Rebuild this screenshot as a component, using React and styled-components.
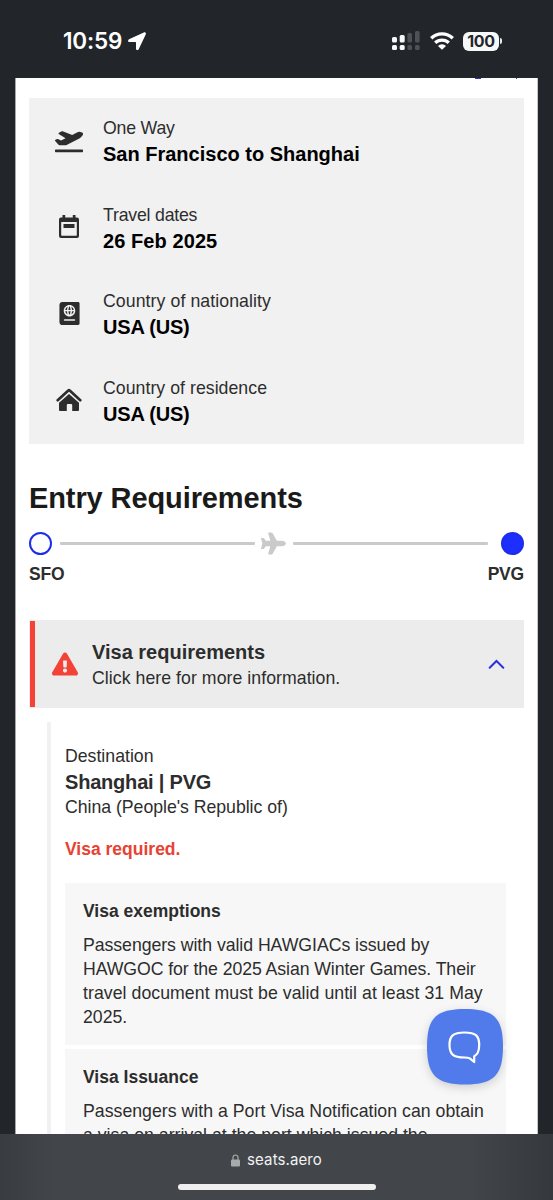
import React from 'react'
import styled, { createGlobalStyle } from 'styled-components'
import { FaExclamationTriangle, FaPassport, FaPlaneDeparture } from 'react-icons/fa'
import { FaPlane } from 'react-icons/fa6'

const GlobalStyle = createGlobalStyle`
  * {
    box-sizing: border-box;
  }

  body {
    margin: 0;
    background: #22262b;
    font-family: 'Liberation Sans', Arial, sans-serif;
    color: #2d2d2d;
  }

  svg {
    display: block;
    flex: none;
  }
`

const Screen = styled.div`
  width: 553px;
  height: 1200px;
  display: flex;
  flex-direction: column;
  overflow: hidden;
`

const StatusBar = styled.header`
  height: 78px;
  flex: none;
  display: flex;
  justify-content: space-between;
  align-items: center;
  padding: 4px 51px 0 63px;
  color: #fff;
`

const Clock = styled.div`
  display: flex;
  align-items: center;
  gap: 6px;
  font: 600 22.5px/28px Inter, sans-serif;
  letter-spacing: -0.2px;
`

const Signals = styled.div`
  display: flex;
  align-items: center;
  gap: 9px;
`

const Battery = styled.div`
  display: flex;
  align-items: center;
  gap: 1px;
`

const BatteryLevel = styled.div`
  width: 36px;
  height: 19px;
  border-radius: 6px;
  background: #f7f8f9;
  color: #22262b;
  text-align: center;
  font: 700 16px/19px Inter, sans-serif;
  letter-spacing: -0.3px;
`

const BatteryTip = styled.div`
  width: 2px;
  height: 6px;
  border-radius: 0 2px 2px 0;
  background: #e8e9ea;
`

const Page = styled.main`
  flex: 1;
  min-height: 0;
  overflow: hidden;
  margin: 0 15px 0 15px;
  padding: 20px 13px 0 13px;
  border-left: 1px solid #a6a7a9;
  border-right: 1px solid #c4c5c6;
  background: #fff;
`

const Summary = styled.section`
  height: 346px;
  padding: 18px 26px 0 23px;
  background: #f1f1f1;
`

const SummaryRow = styled.div`
  display: flex;
  height: 86.5px;
`

const IconCell = styled.div`
  width: 34px;
  height: 49px;
  display: flex;
  align-items: center;
  justify-content: center;
  margin-right: 17px;
  color: #2d2d2d;
`

const Label = styled.div`
  font-size: 17.7px;
  line-height: ${props => props.$line || 24}px;
  height: 25px;
  letter-spacing: ${props => props.$spacing || 0}px;
  white-space: nowrap;
`

const Value = styled.div`
  font-size: 20px;
  line-height: 26px;
  font-weight: bold;
  letter-spacing: ${props => props.$spacing || 0}px;
  color: ${props => props.$color || '#000'};
  white-space: nowrap;
`

const Heading = styled.h1`
  margin: 35px 0 0;
  font-size: 29px;
  line-height: 38px;
  letter-spacing: -0.1px;
  color: #1a1a1a;
`

const Route = styled.div`
  height: 24px;
  margin-top: 14px;
  display: flex;
  align-items: center;
  color: #cacaca;
`

const Stop = styled.div`
  width: 23px;
  height: 23px;
  flex: none;
  border-radius: 50%;
  border: 2.5px solid #1d2eea;
  background: ${props => props.$filled ? '#1d2eff' : '#fff'};
`

const Track = styled.div`
  flex: 1;
  height: 3px;
  border-radius: 1px;
  background: #cacaca;
  margin: ${props => props.$end ? '0 13px 0 7px' : '0 6px 0 8px'};
`

const Codes = styled.div`
  display: flex;
  justify-content: space-between;
  margin-top: 6px;
  font-size: 17.5px;
  line-height: 26px;
  font-weight: bold;
  letter-spacing: -0.2px;
`

const Accordion = styled.div`
  height: 88px;
  margin-top: 33px;
  padding: 0 19px 0 1px;
  display: flex;
  align-items: center;
  background: #ececec;
  color: #f44336;
`

const AlertStripe = styled.div`
  width: 5px;
  height: 86px;
  margin-right: 17px;
  background: #f44336;
`

const AccordionText = styled.div`
  flex: 1;
  margin-left: 14px;
  color: #2d2d2d;
`

const Details = styled.div`
  margin: 14px 18px 0 18px;
  padding: 22px 0 0 14px;
  border-left: 4px solid #f1f1f1;
`

const VisaStatus = styled.div`
  margin: 17px 0 21px;
  font-size: 17.5px;
  line-height: 25px;
  font-weight: bold;
  color: #e84233;
`

const Card = styled.article`
  margin-bottom: 4px;
  padding: 16px 17px 16px 18px;
  background: #f7f7f7;
`

const CardTitle = styled.h2`
  margin: 0 0 10px;
  font-size: 17.5px;
  line-height: 24px;
`

const Line = styled.div`
  font-size: 17.7px;
  line-height: 24px;
  letter-spacing: ${props => props.$spacing || 0}px;
  white-space: nowrap;
`

const LinkSliver = styled.div`
  position: absolute;
  left: 475px;
  top: 78px;
  display: flex;
  gap: 35px;

  &::before,
  &::after {
    content: '';
    height: 1px;
    background: #3232b4;
    width: 6px;
  }

  &::after {
    width: 1px;
  }
`

const ChatButton = styled.button`
  position: absolute;
  left: 427px;
  top: 1009px;
  padding: 0;
  border: 0;
  background: none;
  filter: drop-shadow(0 3px 5px rgba(0, 0, 0, 0.16));
`

const BrowserBar = styled.footer`
  height: 66px;
  flex: none;
  display: flex;
  flex-direction: column;
  align-items: center;
  padding-top: 15px;
  background: linear-gradient(90deg, #393d41, #42464a 10%, #42464a 85%, #35383d);
`

const Address = styled.div`
  display: flex;
  align-items: center;
  gap: 7px;
  height: 22px;
  font: 400 15px/22px Inter, sans-serif;
  letter-spacing: 0.1px;
  color: #f2f2f3;
`

const HomeIndicator = styled.div`
  width: 198px;
  height: 6px;
  margin-top: 13px;
  border-radius: 3px;
  background: #efefef;
`

const LocationIcon = () => (
  <svg width='18' height='18' viewBox='0 0 18 18' fill='#fff'>
    <path d='M15.8.4 1 7.2C-.4 8-.1 10.100 1.400 10.100H7.500c.3 0 .5.2.5.5v6.200c0 1.600 2 1.900 2.700.5L17.700 2.400C18.400 1 17.200-.2 15.800.4Z' />
  </svg>
)

const CellularIcon = () => (
  <svg width='29' height='20' viewBox='0 0 29 20' fill='#f7f8f9'>
    <rect x='0' y='6' width='5' height='5.500' rx='1.500' />
    <rect x='7.700' y='4' width='5' height='7.500' rx='1.500' />
    <rect x='0' y='14' width='5' height='5' rx='1.500' />
    <rect x='7.700' y='14' width='5' height='5' rx='1.500' />
    <g fill='#4e5155'>
      <rect x='15.400' y='2' width='4.600' height='9.500' rx='1.500' />
      <rect x='23' y='0' width='4.600' height='11.500' rx='1.500' />
      <rect x='15.400' y='14' width='4.600' height='5' rx='1.500' />
      <rect x='23' y='14' width='4.600' height='5' rx='1.500' />
    </g>
  </svg>
)

const WifiIcon = () => (
  <svg width='24' height='18' viewBox='0 0 24 18' fill='none' stroke='#fff' strokeWidth='3.300'>
    <path d='M1.200 6.300a15.500 15.500 0 0 1 21.600 0M5.200 10.800a9.800 9.800 0 0 1 13.600 0' />
    <path d='M12 17.800 8 13.900a5.600 5.600 0 0 1 8 0Z' fill='#fff' stroke='none' />
  </svg>
)

const CalendarIcon = () => (
  <svg width='20' height='24' viewBox='0 0 20 24' fill='#2d2d2d'>
    <path fillRule='evenodd' d='M3.500 0h2.700v2.600h7.600V0h2.700v2.600H18a2 2 0 0 1 2 2V21a2 2 0 0 1-2 2H2a2 2 0 0 1-2-2V4.600a2 2 0 0 1 2-2h1.500ZM2.200 7v13.300c0 .3.200.5.500.5h14.600c.3 0 .5-.2.500-.5V7Z' />
    <rect x='4.500' y='9' width='11' height='4' />
  </svg>
)

const HouseIcon = () => (
  <svg width='26' height='24' viewBox='0 0 26 24'>
    <path d='m1.700 12.200 10.600-9.600a1 1 0 0 1 1.400 0l10.600 9.600' fill='none' stroke='#2d2d2d' strokeWidth='2.700' strokeLinecap='round' strokeLinejoin='round' />
    <path d='m13 5.900 10 8.900V22a1 1 0 0 1-1 1h-5.800v-6a1 1 0 0 0-1-1h-3.400a1 1 0 0 0-1 1v6H4a1 1 0 0 1-1-1v-7.200Z' fill='#2d2d2d' />
  </svg>
)

const ChevronIcon = () => (
  <svg width='17' height='10' viewBox='0 0 17 10' fill='none' stroke='#2a32d8' strokeWidth='2'>
    <path d='m1.700 8.800 6.800-6.800 6.800 6.800' strokeLinecap='round' />
  </svg>
)

const ChatIcon = () => (
  <svg width='76' height='76' viewBox='0 0 76 76'>
    <path d='M38 0C67 0 76 9 76 37.500S67 75.500 38 75.500 0 66 0 37.500 9 0 38 0Z' fill='#517bea' />
    <path d='M37.500 24C26 24 22.500 27.500 22.500 36.500S26 49 37.500 49c2.500 0 4 .2 5.300.9L47.200 53.500v-5.800c3.500-1.700 5-5 5-11.200C52.200 27.500 49 24 37.500 24Z' transform='translate(0 -.5)' fill='none' stroke='#fff' strokeWidth='2.200' strokeLinejoin='round' />
  </svg>
)

const LockIcon = () => (
  <svg width='9' height='13' viewBox='0 0 9 13'>
    <rect y='5.500' width='9' height='7' rx='1.300' fill='#a7a9ab' />
    <path d='M2 6V3.500a2.500 2.500 0 0 1 5 0V6' fill='none' stroke='#a7a9ab' strokeWidth='1.200' />
  </svg>
)

const trip = [
  { icon: <FaPlaneDeparture size={28} />, label: 'One Way', labelSpacing: -0.2, value: 'San Francisco to Shanghai' },
  { icon: <CalendarIcon />, label: 'Travel dates', labelSpacing: -0.2, value: '26 Feb 2025', valueSpacing: 0.08 },
  { icon: <FaPassport size={23} />, label: 'Country of nationality', labelSpacing: 0.08, value: 'USA (US)', valueSpacing: -0.2 },
  { icon: <HouseIcon />, label: 'Country of residence', labelSpacing: 0.04, value: 'USA (US)', valueSpacing: -0.2 }
]

const notes = [
  {
    title: 'Visa exemptions',
    lines: [
      { text: 'Passengers with valid HAWGIACs issued by', spacing: -0.05 },
      { text: 'HAWGOC for the 2025 Asian Winter Games. Their', spacing: -0.08 },
      { text: 'travel document must be valid until at least 31 May', spacing: 0.05 },
      { text: '2025.' }
    ]
  },
  {
    title: 'Visa Issuance',
    lines: [
      { text: 'Passengers with a Port Visa Notification can obtain', spacing: 0.02 },
      { text: 'a visa on arrival at the port which issued the', spacing: 0.01 }
    ]
  }
]

const App = () => (
  <Screen>
    <GlobalStyle />
    <StatusBar>
      <Clock>{'10:59'}<LocationIcon /></Clock>
      <Signals>
        <CellularIcon />
        <WifiIcon />
        <Battery><BatteryLevel>{'100'}</BatteryLevel><BatteryTip /></Battery>
      </Signals>
    </StatusBar>
    <Page>
      <Summary>
        {trip.map(row => (
          <SummaryRow key={row.label}>
            <IconCell>{row.icon}</IconCell>
            <div>
              <Label $spacing={row.labelSpacing}>{row.label}</Label>
              <Value $spacing={row.valueSpacing}>{row.value}</Value>
            </div>
          </SummaryRow>
        ))}
      </Summary>
      <Heading>{'Entry Requirements'}</Heading>
      <Route>
        <Stop />
        <Track />
        <FaPlane size={25} />
        <Track $end />
        <Stop $filled />
      </Route>
      <Codes><span>{'SFO'}</span><span>{'PVG'}</span></Codes>
      <Accordion>
        <AlertStripe />
        <FaExclamationTriangle size={26} />
        <AccordionText>
          <Value $color='#2d2d2d'>{'Visa requirements'}</Value>
          <Label $line={26} $spacing={0.05}>{'Click here for more information.'}</Label>
        </AccordionText>
        <ChevronIcon />
      </Accordion>
      <Details>
        <Label>{'Destination'}</Label>
        <Value $color='#2d2d2d' $spacing={-0.2}>{'Shanghai | PVG'}</Value>
        <Label $spacing={-0.03}>{"China (People's Republic of)"}</Label>
        <VisaStatus>{'Visa required.'}</VisaStatus>
        {notes.map(note => (
          <Card key={note.title}>
            <CardTitle>{note.title}</CardTitle>
            {note.lines.map(line => <Line key={line.text} $spacing={line.spacing}>{line.text}</Line>)}
          </Card>
        ))}
      </Details>
    </Page>
    <BrowserBar>
      <Address><LockIcon />{'seats.aero'}</Address>
      <HomeIndicator />
    </BrowserBar>
    <LinkSliver />
    <ChatButton aria-label='Chat'><ChatIcon /></ChatButton>
  </Screen>
)

export default App
